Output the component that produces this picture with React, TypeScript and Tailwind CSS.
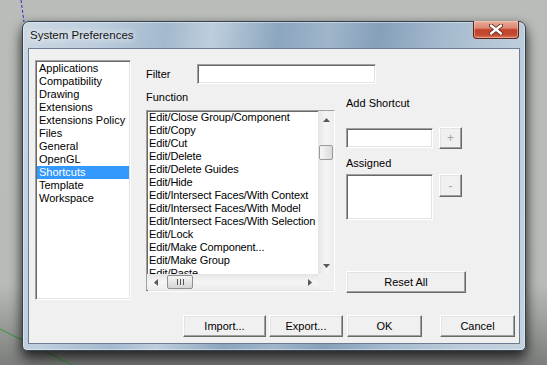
import React from "react";

const sunken =
  "border border-t-[#a0a0a0] border-l-[#a0a0a0] border-r-white border-b-white shadow-[inset_1px_1px_0_#696969,inset_-1px_-1px_0_#e3e3e3] bg-white";
const raised =
  "border border-t-white border-l-white border-r-[#696969] border-b-[#696969] shadow-[inset_-1px_-1px_0_#a0a0a0,inset_1px_1px_0_#e3e3e3] bg-[#f0f0f0] flex items-center justify-center";

const categories = [
  "Applications",
  "Compatibility",
  "Drawing",
  "Extensions",
  "Extensions Policy",
  "Files",
  "General",
  "OpenGL",
  "Shortcuts",
  "Template",
  "Workspace",
];

const functions = [
  "Edit/Close Group/Component",
  "Edit/Copy",
  "Edit/Cut",
  "Edit/Delete",
  "Edit/Delete Guides",
  "Edit/Hide",
  "Edit/Intersect Faces/With Context",
  "Edit/Intersect Faces/With Model",
  "Edit/Intersect Faces/With Selection",
  "Edit/Lock",
  "Edit/Make Component...",
  "Edit/Make Group",
  "Edit/Paste",
];

function Tri({ dir }: { dir: "up" | "down" | "left" | "right" }) {
  const pts =
    dir === "up"
      ? "0,4 7,4 3.5,0"
      : dir === "down"
      ? "0,0 7,0 3.5,4"
      : dir === "left"
      ? "4,0 4,7 0,3.5"
      : "0,0 0,7 4,3.5";
  const w = dir === "up" || dir === "down" ? 7 : 4;
  const h = dir === "up" || dir === "down" ? 4 : 7;
  return (
    <svg width={w} height={h} viewBox={`0 0 ${w} ${h}`}>
      <polygon points={pts} fill="#5a5a5a" />
    </svg>
  );
}

function CloseButton() {
  return (
    <div className="self-start -mt-[1px] mr-[6px] w-[46px] h-[18px] rounded-b-[4px] border border-[#5c2418] border-t-0 bg-[linear-gradient(180deg,#e9ab9b_0%,#dd8a74_40%,#c4432b_52%,#c24b31_80%,#d8765b_100%)] shadow-[inset_0_0_0_1px_rgba(255,220,210,0.45)] flex items-center justify-center">
      <svg width="14" height="11" viewBox="0 0 14 11">
        <path d="M2 1.5 L12 9.5 M12 1.5 L2 9.5" stroke="#5a2015" strokeWidth="4" strokeLinecap="round" />
        <path d="M2 1.5 L12 9.5 M12 1.5 L2 9.5" stroke="#ffffff" strokeWidth="2.4" strokeLinecap="round" />
      </svg>
    </div>
  );
}

function FunctionList() {
  return (
    <div className={`mt-[6px] w-[189px] h-[182px] ${sunken} flex flex-col`}>
      <div className="flex h-[163px]">
        <div className="flex-1 overflow-hidden pl-[2px] tracking-[-0.12px]">
          {functions.map((f) => (
            <div key={f} className="h-[13px] leading-[13px] whitespace-nowrap">
              {f}
            </div>
          ))}
        </div>
        <div className="w-[16px] shrink-0 flex flex-col bg-[linear-gradient(90deg,#e5e5e5,#f5f5f5_50%,#ececec)]">
          <div className="h-[17px] flex items-center justify-center">
            <Tri dir="up" />
          </div>
          <div className="mt-[17px] h-[15px] mx-[1px] rounded-[2px] border border-[#9a9a9a] bg-[linear-gradient(90deg,#f6f6f6,#dadada)]" />
          <div className="flex-1" />
          <div className="h-[17px] flex items-center justify-center">
            <Tri dir="down" />
          </div>
        </div>
      </div>
      <div className="flex h-[16px]">
        <div className="flex-1 flex bg-[linear-gradient(180deg,#e5e5e5,#f5f5f5_50%,#ececec)]">
          <div className="w-[17px] flex items-center justify-center">
            <Tri dir="left" />
          </div>
          <div className="ml-[3px] w-[26px] my-[1px] rounded-[2px] border border-[#8f8f8f] bg-[linear-gradient(180deg,#f6f6f6,#d4d4d4)] flex items-center justify-center gap-[2px]">
            <div className="w-[1px] h-[6px] bg-[#555]" />
            <div className="w-[1px] h-[6px] bg-[#555]" />
            <div className="w-[1px] h-[6px] bg-[#555]" />
          </div>
          <div className="flex-1" />
          <div className="w-[17px] flex items-center justify-center">
            <Tri dir="right" />
          </div>
        </div>
        <div className="w-[16px] bg-[#f0f0f0]" />
      </div>
    </div>
  );
}

function Window() {
  return (
    <div className="relative z-10 w-[504px] h-[330px] flex flex-col border border-[#34414f] rounded-t-[7px] rounded-b-[5px] bg-[linear-gradient(100deg,#cbd7e3_0%,#bccddd_14%,#a3b9ce_26%,#bfcedd_34%,#8ca6bf_46%,#9fb5ca_55%,#86a0ba_64%,#a6bbcf_76%,#bccbda_88%,#c4d2df_100%)] shadow-[inset_0_0_0_1px_rgba(255,255,255,0.4),0_9px_14px_rgba(0,0,0,0.6),0_2px_8px_rgba(0,0,0,0.35)]">
      <div className="h-[26px] flex justify-between">
        <div className="self-center pt-[1px] pl-[7px] text-[11.5px] text-[#151515] [text-shadow:0_0_6px_rgba(255,255,255,0.95),0_0_10px_rgba(255,255,255,0.8)]">
          System Preferences
        </div>
        <CloseButton />
      </div>
      <div className="mx-[5px] h-[296px] border border-[#6a7d91] bg-[#f0f0f0] flex flex-col">
        <div className="h-[251px] pt-[11px] flex items-start">
          <div className={`ml-[6px] w-[96px] h-[240px] shrink-0 ${sunken} pt-[1px] px-[1px]`}>
            {categories.map((c) => (
              <div
                key={c}
                className={`h-[13px] leading-[13px] pl-[2px] whitespace-nowrap ${
                  c === "Shortcuts" ? "bg-[#3399ff] text-white" : ""
                }`}
              >
                {c}
              </div>
            ))}
          </div>
          <div className="ml-[15px] w-[189px] shrink-0 flex flex-col">
            <div className="mt-[4px] h-[20px] flex items-center">
              <span className="w-[51px] shrink-0">Filter</span>
              <div className={`w-[179px] h-[20px] shrink-0 ${sunken}`} />
            </div>
            <div className="mt-[7px] h-[13px] leading-[13px]">Function</div>
            <FunctionList />
          </div>
          <div className="ml-[11px] w-[120px] shrink-0 flex flex-col">
            <div className="mt-[37px] h-[13px] leading-[13px]">Add Shortcut</div>
            <div className="mt-[17px] h-[22px] flex items-center">
              <div className={`w-[87px] h-[20px] ${sunken}`} />
              <div className={`ml-[6px] w-[23px] h-[22px] ${raised} text-[#a0a0a0] text-[12px]`}>+</div>
            </div>
            <div className="mt-[8px] h-[13px] leading-[13px]">Assigned</div>
            <div className="mt-[4px] flex items-start">
              <div className={`w-[87px] h-[46px] ${sunken}`} />
              <div className={`ml-[6px] w-[23px] h-[23px] ${raised} text-[#a0a0a0] text-[12px]`}>-</div>
            </div>
            <div className={`mt-[51px] w-[120px] h-[22px] ${raised}`}>Reset All</div>
          </div>
        </div>
        <div className="mt-[15px] pl-[154px] flex">
          <div className={`w-[83px] h-[22px] ${raised}`}>Import...</div>
          <div className={`ml-[3px] w-[74px] h-[22px] ${raised}`}>Export...</div>
          <div className={`ml-[4px] w-[75px] h-[22px] ${raised}`}>OK</div>
          <div className={`ml-[18px] w-[75px] h-[22px] ${raised}`}>Cancel</div>
        </div>
      </div>
    </div>
  );
}

export default function App() {
  return (
    <div className="relative w-[547px] h-[365px] overflow-hidden bg-[linear-gradient(180deg,#babcb9_0%,#b9bbb8_78%,#7c7e7c_100%)] pt-[21px] pl-[22px] font-['Liberation_Sans',Arial,sans-serif] text-[11px] text-black">
      <svg className="absolute left-0 top-0" width="547" height="365">
        <line x1="21" y1="0" x2="24" y2="22" stroke="#2a2ad2" strokeWidth="1" strokeDasharray="3 2" />
        <line x1="0" y1="329" x2="72" y2="365" stroke="#2f9a35" strokeWidth="1" />
      </svg>
      <Window />
    </div>
  );
}
